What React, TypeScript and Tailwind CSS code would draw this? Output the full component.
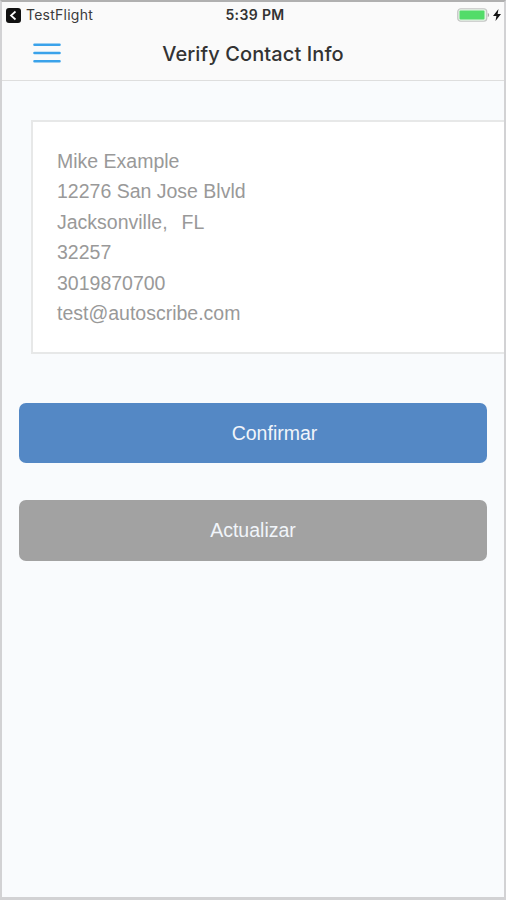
const contact = {
  name: 'Mike Example',
  street: '12276 San Jose Blvld',
  city: 'Jacksonville',
  state: 'FL',
  zip: '32257',
  phone: '3019870700',
  email: 'test@autoscribe.com',
};

function StatusBar() {
  return (
    <div className="grid h-[26px] grid-cols-[1fr_auto_1fr] items-center pl-1 pr-[2px] text-[#3a3a3a]">
      <div className="flex items-center gap-[5px]">
        <svg className="h-[15px] w-[15px]" viewBox="0 0 15 15" fill="none">
          <rect width="15" height="15" rx="3" fill="#111" />
          <path d="M9.5 3.5 5 7.5l4.5 4" stroke="#fff" strokeWidth="1.7" />
        </svg>
        <span className="text-[14px] leading-none tracking-[0.25px]">TestFlight</span>
      </div>
      <span className="ml-[2px] text-[14px] leading-none font-semibold tracking-[0.35px] text-[#333]">5:39 PM</span>
      <div className="flex items-center justify-end gap-[3px] pr-px">
        <svg className="h-[14px] w-[33px]" viewBox="0 0 33 14">
          <rect x="0.75" y="0.75" width="29" height="12.5" rx="3" fill="#e3f5e5" stroke="#c4c4c4" strokeWidth="1.2" />
          <rect x="2.5" y="2.5" width="25" height="9" rx="1" fill="#52dc69" />
          <path d="M30.8 5v4c1.8-.5 1.8-3.5 0-4Z" fill="#aaa" />
        </svg>
        <svg className="h-[12px] w-[8px]" viewBox="0 0 8 12">
          <path d="M5.5 0 0 7h3.4L2.5 12 8 5H4.6Z" fill="#151515" />
        </svg>
      </div>
    </div>
  );
}

function Header() {
  return (
    <header className="h-[79px] border-b border-[#dedede] bg-[#fafafa] font-['Inter',sans-serif]">
      <StatusBar />
      <div className="grid h-[50px] grid-cols-[1fr_auto_1fr] items-center">
        <button className="ml-[31px] w-7" aria-label="Menu">
          <svg className="block h-5 w-7" viewBox="0 0 28 20" stroke="#3aa2ea" strokeWidth="2.6" strokeLinecap="round">
            <path d="M1.5 1.7h25M1.5 10h25M1.5 18.300h25" />
          </svg>
        </button>
        <h1 className="pt-px text-[20px] leading-none font-medium tracking-[0.1px] text-[#333]">Verify Contact Info</h1>
      </div>
    </header>
  );
}

export default function App() {
  return (
    <div className="flex h-[900px] w-[506px] flex-col overflow-hidden border-2 border-b-[3px] border-[#d2d2d4] border-t-[#b0b0b0] bg-[#f9fbfd] font-['Liberation_Sans',sans-serif]">
      <Header />

      {/* Contact card runs off the right edge of the screen */}
      <section className="mt-[39px] ml-[29px] h-[234px] border-2 border-r-0 border-[#e7e8e8] bg-white pt-[24px] pl-[24px] text-[19.5px] leading-[30.4px] text-[#999]">
        <p>{contact.name}</p>
        <p>{contact.street}</p>
        <p className="flex gap-[14px]">
          <span>{contact.city},</span>
          <span>{contact.state}</span>
        </p>
        <p>{contact.zip}</p>
        <p>{contact.phone}</p>
        <p>{contact.email}</p>
      </section>

      {/* Actions */}
      <div className="mt-[49px] flex flex-col gap-[37px] px-[17px] text-[19.5px] text-[#f1f5fa]">
        <button className="h-[60px] rounded-[7px] bg-[#5488c5] pt-[2px] pl-[43px]">Confirmar</button>
        <button className="h-[61px] rounded-[7px] bg-[#a2a2a2] pt-px">Actualizar</button>
      </div>
    </div>
  );
}
